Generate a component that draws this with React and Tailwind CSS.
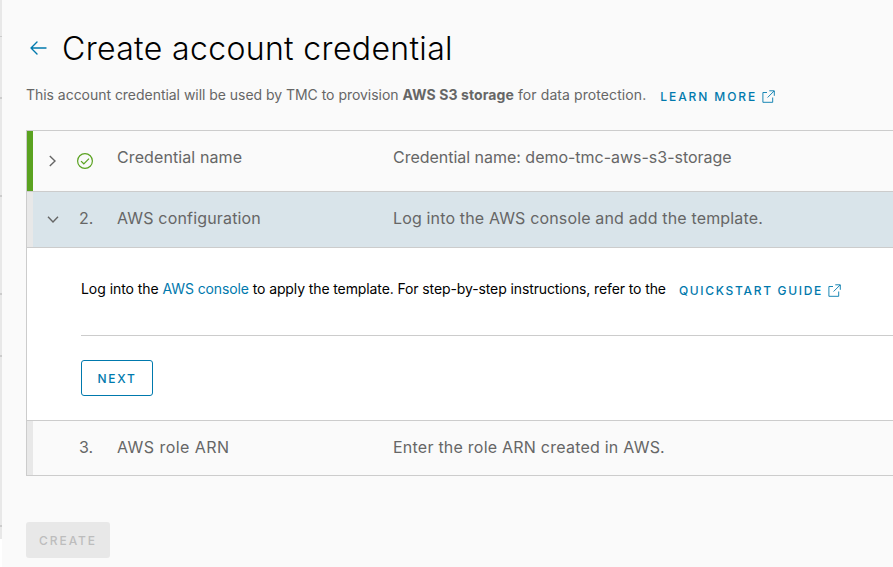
function ExternalIcon() {
  return (
    <svg className="-mt-px" width="13" height="13" viewBox="0 0 13 13" fill="none" stroke="#0079ad" strokeWidth="0.9">
      <path d="M5 2.5H0.9V12.3H10.7V7.5" />
      <path d="M7.3 0.8H12.3V5.8M12.1 1L5.6 7.5" />
    </svg>
  );
}

function ActionLink({ children, className }) {
  return (
    <a className={`flex h-4 items-center whitespace-nowrap text-[12px] font-medium text-[#0079ad] ${className}`}>
      <span>{children}</span>
      <ExternalIcon />
    </a>
  );
}

function StepHeader({ bar, row, marker, caret, title, titleClass, text, textClass }) {
  return (
    <div className={`flex text-[16px] leading-6 whitespace-nowrap text-[#666666] ${row}`}>
      <div className={`w-1.5 shrink-0 ${bar}`} />
      <div className="flex w-[46px] shrink-0 pl-[13px]">{caret}</div>
      <div className="w-[38px] shrink-0">{marker}</div>
      <div className="w-[276px] shrink-0 pt-[14px]">
        <span className={titleClass}>{title}</span>
      </div>
      <div className="pt-[14px]">
        <span className={textClass}>{text}</span>
      </div>
    </div>
  );
}

function SideRail() {
  return (
    <div className="h-[539px] w-0.5 shrink-0 bg-[#e8e8e8]">
      <div className="h-[37px] border-b border-[#cccccc]" />
      <div className="h-[62px] border-b-2 border-[#cccccc]" />
      <div className="h-[98px] border-b-2 border-[#cccccc]" />
      <div className="h-[98px] border-b-2 border-[#cccccc]" />
      <div className="h-[62px] border-b-2 border-[#cccccc]" />
      <div className="h-[170px] border-b-2 border-[#cccccc]" />
    </div>
  );
}

export default function App() {
  return (
    <div className="flex h-[567px] w-[893px] overflow-hidden bg-white font-['Inter',sans-serif]">
      <SideRail />
      <main className="flex min-w-0 flex-1 flex-col bg-[#fafafa] pl-6">
        <header className="mt-7 flex h-10 shrink-0 items-center">
          <svg className="ml-1" width="17" height="14" viewBox="0 0 17 14" fill="none" stroke="#0079ad" strokeWidth="1.4" strokeLinecap="round" strokeLinejoin="round">
            <path d="M7 1L1 7L7 13M1 7H16" />
          </svg>
          <h1 className="ml-[15px] pt-0.5 text-[32px] leading-10 font-light tracking-[0.35px] whitespace-nowrap text-black">
            Create account credential
          </h1>
        </header>

        <div className="mt-[17px] flex h-5 shrink-0 text-[14px] leading-5 whitespace-nowrap text-[#666666]">
          <p>
            <span className="tracking-[-0.035px]">This account credential will be used by TMC to provision </span>
            <strong className="font-bold tracking-[0.1px]">AWS S3 storage</strong>
            <span className="tracking-[0.09px]"> for data protection.</span>
          </p>
          <ActionLink className="mt-1 ml-3.5 gap-[5px] tracking-[1.9px]">LEARN MORE</ActionLink>
        </div>

        <section className="mt-[25px] h-[346px] shrink-0 border-y border-l border-[#cccccc]">
          <StepHeader
            row="h-[61px] border-b border-[#cccccc]"
            bar="bg-[#5aa220]"
            caret={
              <svg className="mt-6 ml-[3px]" width="7" height="12" viewBox="0 0 7 12" fill="none" stroke="#666666" strokeWidth="1.4">
                <path d="M0.8 1L6 6L0.8 11" />
              </svg>
            }
            marker={
              <svg className="mt-[22px] -ml-[2px]" width="16" height="16" viewBox="0 0 16 16" fill="none" stroke="#5aa220" strokeWidth="1.2">
                <circle cx="8" cy="8" r="7.4" />
                <path d="M4 8.1L6.8 10.8L12 5.6" />
              </svg>
            }
            title="Credential name"
            titleClass="tracking-[0.1px]"
            text="Credential name: demo-tmc-aws-s3-storage"
            textClass="tracking-[-0.02px]"
          />
          <StepHeader
            row="h-14 border-b border-[#cccccc] bg-[#d9e4ea]"
            bar="bg-[#e8e8e8]"
            caret={
              <svg className="mt-6 ml-[1px]" width="12" height="7" viewBox="0 0 12 7" fill="none" stroke="#666666" strokeWidth="1.4">
                <path d="M1 0.8L6 6L11 0.8" />
              </svg>
            }
            marker={<div className="pt-[14px]">2.</div>}
            title="AWS configuration"
            titleClass="tracking-[0.17px]"
            text="Log into the AWS console and add the template."
            textClass="tracking-[0.15px]"
          />
          <div className="h-[173px] border-b border-[#cccccc] bg-white pl-[54px]">
            <div className="flex h-[88px] border-b border-[#cccccc] pt-[31px] text-[14px] leading-5 whitespace-nowrap text-black">
              <p>
                <span className="tracking-[-0.05px]">Log into the </span>
                <a className="tracking-[-0.12px] text-[#0079ad]">AWS console</a>
                <span className="tracking-[-0.11px]"> to apply the template. For step-by-step instructions, refer to the</span>
              </p>
              <ActionLink className="mt-1 ml-[13px] gap-[5px] tracking-[1.68px]">QUICKSTART GUIDE</ActionLink>
            </div>
            <button className="mt-6 flex h-9 w-[72px] items-center justify-center rounded-[3px] border border-[#0079ad] pt-0.5 text-[12px] font-medium tracking-[1.7px] text-[#0079ad]">
              NEXT
            </button>
          </div>
          <StepHeader
            row="h-[54px]"
            bar="bg-[#e8e8e8]"
            marker={<div className="pt-[14px]">3.</div>}
            title="AWS role ARN"
            titleClass="tracking-[0.46px]"
            text="Enter the role ARN created in AWS."
            textClass="tracking-[0.23px]"
          />
        </section>

        <button className="mt-[46px] flex h-9 w-[84px] shrink-0 items-center justify-center rounded-[3px] bg-[#e8e8e8] pt-0.5 text-[12px] font-medium tracking-[1.93px] text-[#bdbdbd]">
          CREATE
        </button>
      </main>
    </div>
  );
}
